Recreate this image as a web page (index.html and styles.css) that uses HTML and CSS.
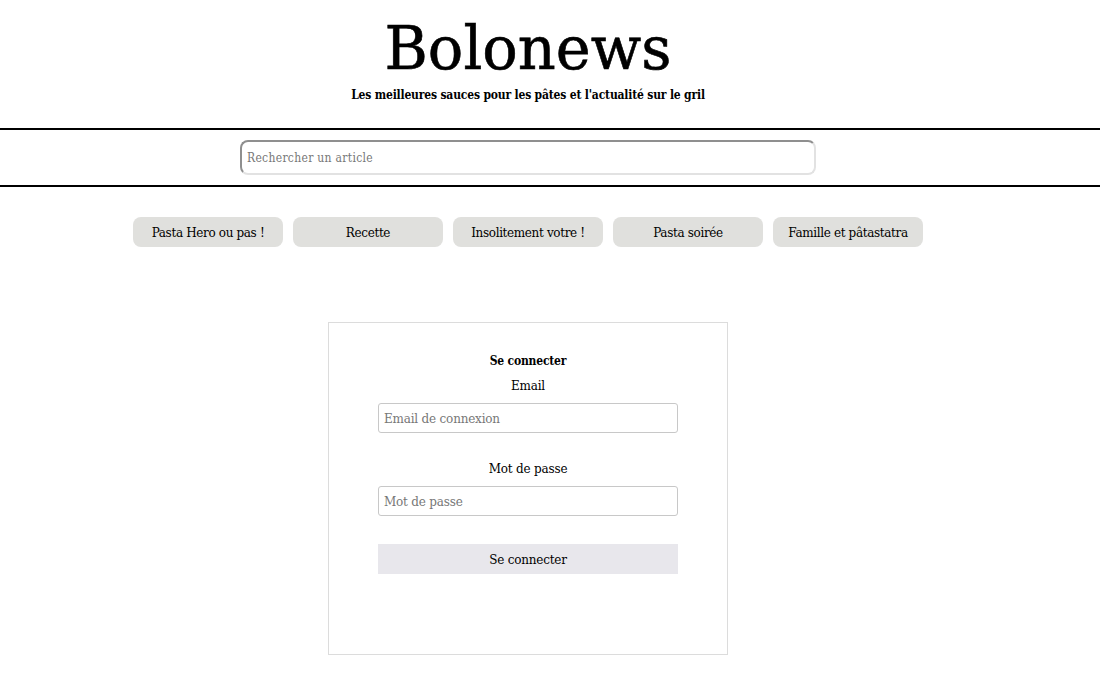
FILE: index.html
```html
<!DOCTYPE html>
<html lang="fr">
<head>
<meta charset="utf-8">
<title>Bolonews</title>
<link rel="stylesheet" href="styles.css">
</head>
<body>
<header class="header">
  <div class="wrap">
    <h1 class="title">Bolonews</h1>
    <p class="tagline">Les meilleures sauces pour les pâtes et l'actualité sur le gril</p>
  </div>
</header>
<div class="searchbar">
  <div class="wrap">
    <input class="search" type="text" placeholder="Rechercher un article">
  </div>
</div>
<nav class="wrap nav">
  <button class="cat">Pasta Hero ou pas !</button>
  <button class="cat">Recette</button>
  <button class="cat">Insolitement votre !</button>
  <button class="cat">Pasta soirée</button>
  <button class="cat">Famille et pâtastatra</button>
</nav>
<main class="wrap main">
  <form class="login">
    <h2 class="login-title">Se connecter</h2>
    <label class="label">Email</label>
    <input class="field" type="text" placeholder="Email de connexion">
    <label class="label label-gap">Mot de passe</label>
    <input class="field" type="password" placeholder="Mot de passe">
    <button class="submit" type="button">Se connecter</button>
  </form>
</main>
</body>
</html>
```
FILE: styles.css
```css
* { box-sizing: border-box; }
body {
  margin: 0;
  font-family: "DejaVu Serif", "Liberation Serif", serif;
  color: #000;
  background: #fff;
}
.wrap {
  width: 1056px;
  display: flex;
  flex-direction: column;
  align-items: center;
}
.header {
  height: 128px;
  padding-top: 12px;
}
.title {
  margin: 0;
  font-size: 59px;
  font-weight: normal;
  line-height: 74px;
  -webkit-text-stroke: 0.6px #000;
}
.tagline {
  margin: 1px 0 0;
  font-size: 12px;
  font-weight: bold;
  font-stretch: condensed;
  letter-spacing: -0.18px;
  line-height: 16px;
}
.searchbar {
  border-top: 2px solid #000;
  border-bottom: 2px solid #000;
  height: 59px;
  padding-top: 10px;
}
.search {
  width: 576px;
  height: 35px;
  border: 2px solid;
  border-color: #8f8f8f #e2e2e2 #e2e2e2 #8f8f8f;
  border-radius: 8px;
  padding: 1px 5px 0;
  font-family: inherit;
  font-size: 12px;
  font-stretch: condensed;
  letter-spacing: 0.3px;
  color: #333;
  outline: none;
}
.search::placeholder { color: #777; }
.nav {
  flex-direction: row;
  justify-content: center;
  gap: 10px;
  margin-top: 30px;
}
.cat {
  width: 150px;
  height: 30px;
  border: none;
  border-radius: 8px;
  background: #e0e0dd;
  font-family: inherit;
  font-size: 12px;
  letter-spacing: -0.35px;
  color: #000;
  padding: 2px 0 0;
}
.main {
  margin-top: 75px;
}
.login {
  width: 400px;
  height: 333px;
  border: 1px solid #dcdcdc;
  display: flex;
  flex-direction: column;
  align-items: center;
  padding-top: 29px;
}
.login-title {
  margin: 0;
  font-size: 12px;
  line-height: 18px;
  font-weight: bold;
  font-stretch: condensed;
  letter-spacing: -0.2px;
}
.label {
  margin-top: 7px;
  font-size: 12px;
  line-height: 18px;
  letter-spacing: -0.2px;
}
.label-gap { margin-top: 27px; }
.field {
  width: 300px;
  height: 30px;
  margin-top: 8px;
  border: 1px solid #c8c8c8;
  border-radius: 3px;
  padding: 2px 5px 0;
  font-family: inherit;
  font-size: 12px;
  letter-spacing: -0.2px;
  outline: none;
}
.field::placeholder { color: #777; }
.submit {
  width: 300px;
  height: 30px;
  margin-top: 28px;
  border: none;
  background: #e8e7ec;
  font-family: inherit;
  font-size: 12px;
  letter-spacing: -0.2px;
  color: #000;
  padding: 2px 0 0;
}
```
